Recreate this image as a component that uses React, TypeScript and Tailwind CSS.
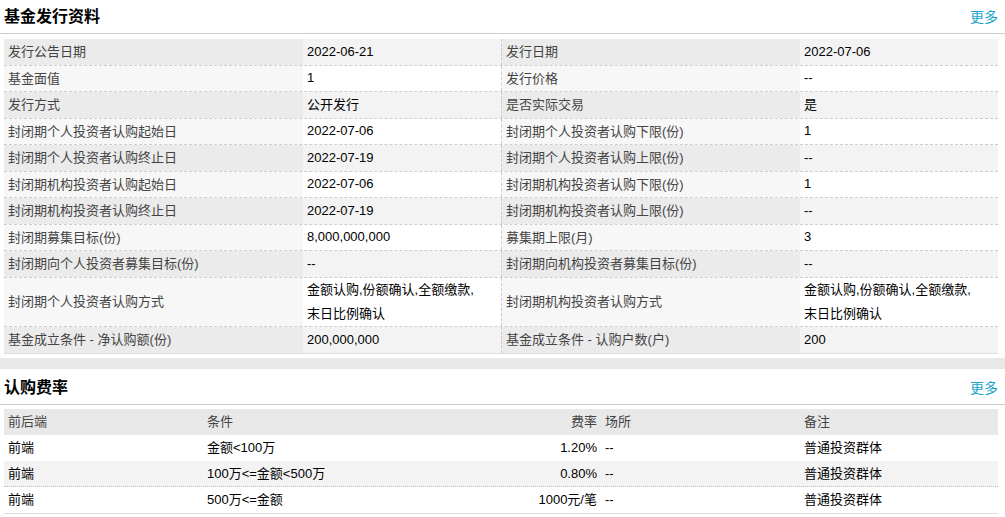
import React from "react"

const font = { fontFamily: '"Liberation Sans", Arial, "Noto Sans CJK SC", sans-serif' }

const issueRows: [string, string[], string, string[]][] = [
  ["发行公告日期", ["2022-06-21"], "发行日期", ["2022-07-06"]],
  ["基金面值", ["1"], "发行价格", ["--"]],
  ["发行方式", ["公开发行"], "是否实际交易", ["是"]],
  ["封闭期个人投资者认购起始日", ["2022-07-06"], "封闭期个人投资者认购下限(份)", ["1"]],
  ["封闭期个人投资者认购终止日", ["2022-07-19"], "封闭期个人投资者认购上限(份)", ["--"]],
  ["封闭期机构投资者认购起始日", ["2022-07-06"], "封闭期机构投资者认购下限(份)", ["1"]],
  ["封闭期机构投资者认购终止日", ["2022-07-19"], "封闭期机构投资者认购上限(份)", ["--"]],
  ["封闭期募集目标(份)", ["8,000,000,000"], "募集期上限(月)", ["3"]],
  ["封闭期向个人投资者募集目标(份)", ["--"], "封闭期向机构投资者募集目标(份)", ["--"]],
  ["封闭期个人投资者认购方式", ["金额认购,份额确认,全额缴款,", "末日比例确认"], "封闭期机构投资者认购方式", ["金额认购,份额确认,全额缴款,", "末日比例确认"]],
  ["基金成立条件 - 净认购额(份)", ["200,000,000"], "基金成立条件 - 认购户数(户)", ["200"]],
]

const feeRows = [
  ["前端", "金额<100万", "1.20%", "--", "普通投资群体"],
  ["前端", "100万<=金额<500万", "0.80%", "--", "普通投资群体"],
  ["前端", "500万<=金额", "1000元/笔", "--", "普通投资群体"],
]

function SectionTitle({ title }: { title: string }) {
  return (
    <div className="flex h-[34px] items-center justify-between border-b border-[#cccccc] pl-1 pr-[7px] pt-px">
      <h2 className="text-[16px] font-bold text-black">{title}</h2>
      <a className="text-[14px] text-[#1ba3cb]">更多</a>
    </div>
  )
}

function Lines({ lines }: { lines: string[] }) {
  return (
    <div className="flex flex-col">
      {lines.map((l, i) => (
        <span key={i} className="whitespace-nowrap">
          {l}
        </span>
      ))}
    </div>
  )
}

export default function App() {
  return (
    <div className="w-[1005px] bg-white text-[13px]" style={font}>
      <SectionTitle title="基金发行资料" />
      <div className="ml-1 mt-[5px] w-[994px] border-b border-[#dddddd]">
        {issueRows.map((r, i) => {
          const odd = i % 2 === 0
          const last = i === issueRows.length - 1
          const tall = r[1].length > 1
          const labelBg = odd ? "bg-[#ebebeb]" : "bg-[#f7f7f7]"
          const valueBg = odd ? "bg-[#f3f3f3]" : "bg-white"
          return (
            <div
              key={i}
              className={`grid grid-cols-[299px_198px_299px_198px] ${tall ? "h-[49px]" : "h-[26.5px]"} ${last ? "" : "border-b border-dashed border-[#cccccc]"}`}
            >
              <div className={`flex items-center pl-1 text-[#444444] ${labelBg}`}>{r[0]}</div>
              <div className={`flex items-center pl-1 leading-[24px] text-black ${valueBg}`}>
                <Lines lines={r[1]} />
              </div>
              <div className={`flex items-center border-l border-dashed border-[#cccccc] pl-1 text-[#444444] ${labelBg}`}>{r[2]}</div>
              <div className={`flex items-center pl-1 leading-[24px] text-black ${valueBg}`}>
                <Lines lines={r[3]} />
              </div>
            </div>
          )
        })}
      </div>
      <div className="mt-[4px] h-[11px] bg-[#e8e8e8]" />
      <div className="pt-[2px]">
        <SectionTitle title="认购费率" />
      </div>
      <div className="ml-1 mt-[4px] w-[994px] border-b border-[#dddddd]">
        <div className="grid h-[26px] grid-cols-[199px_298px_100px_199px_198px] items-center bg-[#e8e8e8] text-[#444444]">
          <div className="pl-1">前后端</div>
          <div className="pl-1">条件</div>
          <div className="pr-1 text-right">费率</div>
          <div className="pl-1">场所</div>
          <div className="pl-1">备注</div>
        </div>
        {feeRows.map((r, i) => (
          <div
            key={i}
            className={`grid h-[26px] grid-cols-[199px_298px_100px_199px_198px] items-center text-black ${i === 1 ? "border-b border-dotted border-[#bbbbbb] bg-[#f3f3f3]" : "bg-white"}`}
          >
            <div className="pl-1">{r[0]}</div>
            <div className="pl-1">{r[1]}</div>
            <div className="pr-1 text-right">{r[2]}</div>
            <div className="pl-1">{r[3]}</div>
            <div className="pl-1">{r[4]}</div>
          </div>
        ))}
      </div>
    </div>
  )
}
